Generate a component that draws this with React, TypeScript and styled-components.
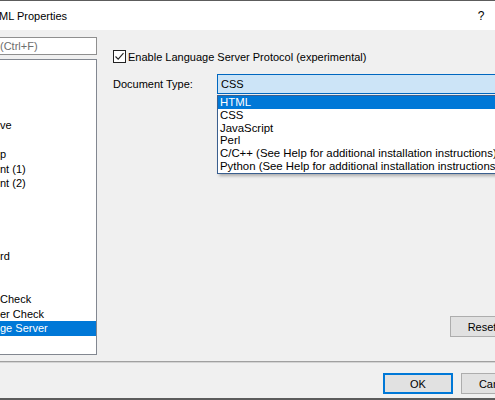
import { createGlobalStyle, styled } from 'styled-components'

const GlobalStyle = createGlobalStyle`
  html, body {
    margin: 0;
    padding: 0;
    background: #f0f0f0;
  }
  body {
    font-family: "Segoe UI", "Liberation Sans", Arial, sans-serif;
    font-size: 11px;
    color: #000;
  }
  #root {
    width: 495px;
    height: 400px;
    overflow: hidden;
  }
`

const Window = styled.div`
  width: 550px;
  height: 400px;
  box-sizing: border-box;
  display: flex;
  flex-direction: column;
  background: #f0f0f0;
  border-top: 1px solid #5c5c5c;
  border-bottom: 2px solid #5c5c5c;
`

const TitleBar = styled.div`
  height: 29px;
  flex-shrink: 0;
  display: flex;
  align-items: center;
  justify-content: space-between;
  background: #fff;
`

const Title = styled.span`
  margin-left: -1px;
  font-size: 11px;
`

const TitleButtons = styled.div`
  display: flex;
  height: 100%;
`

const TitleButton = styled.div`
  width: 46px;
  height: 100%;
  display: flex;
  align-items: center;
  justify-content: center;
  font-size: 12px;
`

const Body = styled.div`
  flex: 1;
  display: flex;
  padding: 7px 36px 6px 0;
  min-height: 0;
`

const LeftColumn = styled.div`
  width: 97px;
  display: flex;
  flex-direction: column;
  gap: 4px;
`

const SearchBox = styled.div`
  height: 18px;
  box-sizing: border-box;
  border: 1px solid #8f8f8f;
  border-left: none;
  background: #fff;
  color: #6d6d6d;
  display: flex;
  align-items: center;
  white-space: nowrap;
  overflow: hidden;
`

const ListBox = styled.div`
  flex: 1;
  box-sizing: border-box;
  border: 1px solid #828790;
  border-left: none;
  background: #fff;
  overflow: hidden;
`

const ListItem = styled.div<{ $selected?: boolean }>`
  height: 14.5px;
  line-height: 14.5px;
  white-space: nowrap;
  background: ${p => (p.$selected ? '#0078d7' : 'transparent')};
  color: ${p => (p.$selected ? '#fff' : '#000')};
`

const RightPanel = styled.div`
  flex: 1;
  margin-left: 16px;
  padding-top: 13px;
  display: flex;
  flex-direction: column;
`

const CheckRow = styled.label`
  display: flex;
  align-items: center;
  gap: 2px;
  height: 13px;
  white-space: nowrap;
`

const CheckBox = styled.span`
  width: 13px;
  height: 13px;
  box-sizing: border-box;
  border: 1px solid #222;
  background: #fff;
  display: flex;
  align-items: center;
  justify-content: center;
  flex-shrink: 0;
`

const FieldRow = styled.div`
  margin-top: 11px;
  height: 20px;
  display: flex;
  align-items: center;
`

const FieldLabel = styled.span`
  width: 104px;
  flex-shrink: 0;
`

const Combo = styled.div`
  flex: 1;
  height: 20px;
  box-sizing: border-box;
  position: relative;
  border: 1px solid #0067c0;
  background: #cce4f7;
  display: flex;
  align-items: center;
  padding-left: 3px;
`

const DropList = styled.div`
  position: absolute;
  left: -1px;
  top: 20px;
  min-width: 100%;
  border: 1px solid #3a5f8f;
  background: #fff;
  white-space: nowrap;
  box-shadow: 2px 2px 3px rgba(0, 0, 0, 0.28);
  z-index: 2;
`

const DropItem = styled.div<{ $selected?: boolean }>`
  height: 12.8px;
  line-height: 12.8px;
  padding: 0 8px 0 2px;
  font-size: 11.4px;
  background: ${p => (p.$selected ? '#0078d7' : 'transparent')};
  color: ${p => (p.$selected ? '#fff' : '#000')};
`

const Button = styled.button<{ $default?: boolean }>`
  height: 21px;
  box-sizing: border-box;
  margin: 0;
  padding: 0;
  font: inherit;
  color: #000;
  background: #e1e1e1;
  border: 1px solid ${p => (p.$default ? '#0078d7' : '#adadad')};
  box-shadow: ${p => (p.$default ? 'inset 0 0 0 1px #0078d7' : 'none')};
`

const ResetButton = styled(Button)`
  width: 64px;
  margin-top: auto;
  margin-bottom: 18px;
  align-self: flex-end;
`

const Footer = styled.div`
  height: 37px;
  flex-shrink: 0;
  box-sizing: border-box;
  border-top: 1px solid #a0a0a0;
  box-shadow: inset 0 1px 0 #d4d4d4;
  display: flex;
  justify-content: flex-end;
  align-items: flex-start;
  gap: 8px;
  padding: 11px 19px 0 0;
`

const FooterButton = styled(Button)`
  width: 70px;
`

const listItems: { text: string; selected?: boolean }[] = [
  { text: '' },
  { text: '' },
  { text: '' },
  { text: '' },
  { text: 've' },
  { text: '' },
  { text: 'p' },
  { text: 'nt (1)' },
  { text: 'nt (2)' },
  { text: '' },
  { text: '' },
  { text: '' },
  { text: '' },
  { text: 'rd' },
  { text: '' },
  { text: '' },
  { text: 'Check' },
  { text: 'er Check' },
  { text: 'ge Server', selected: true },
]

const docTypes = [
  'HTML',
  'CSS',
  'JavaScript',
  'Perl',
  'C/C++ (See Help for additional installation instructions)',
  'Python (See Help for additional installation instructions)',
]

export default function App() {
  return (
    <>
      <GlobalStyle />
      <Window>
        <TitleBar>
          <Title>ML Properties</Title>
          <TitleButtons>
            <TitleButton>?</TitleButton>
            <TitleButton>✕</TitleButton>
          </TitleButtons>
        </TitleBar>
        <Body>
          <LeftColumn>
            <SearchBox>(Ctrl+F)</SearchBox>
            <ListBox>
              {listItems.map((item, i) => (
                <ListItem key={i} $selected={item.selected}>
                  {item.text}
                </ListItem>
              ))}
            </ListBox>
          </LeftColumn>
          <RightPanel>
            <CheckRow>
              <CheckBox>
                <svg width="11" height="11" viewBox="0 0 11 11">
                  <path d="M1.5 5.5 L4.2 8.2 L9.5 2.2" fill="none" stroke="#222" strokeWidth="1.1" />
                </svg>
              </CheckBox>
              Enable Language Server Protocol (experimental)
            </CheckRow>
            <FieldRow>
              <FieldLabel>Document Type:</FieldLabel>
              <Combo>
                CSS
                <DropList>
                  {docTypes.map((t, i) => (
                    <DropItem key={t} $selected={i === 0}>
                      {t}
                    </DropItem>
                  ))}
                </DropList>
              </Combo>
            </FieldRow>
            <ResetButton>Reset</ResetButton>
          </RightPanel>
        </Body>
        <Footer>
          <FooterButton $default>OK</FooterButton>
          <FooterButton>Cancel</FooterButton>
        </Footer>
      </Window>
    </>
  )
}
